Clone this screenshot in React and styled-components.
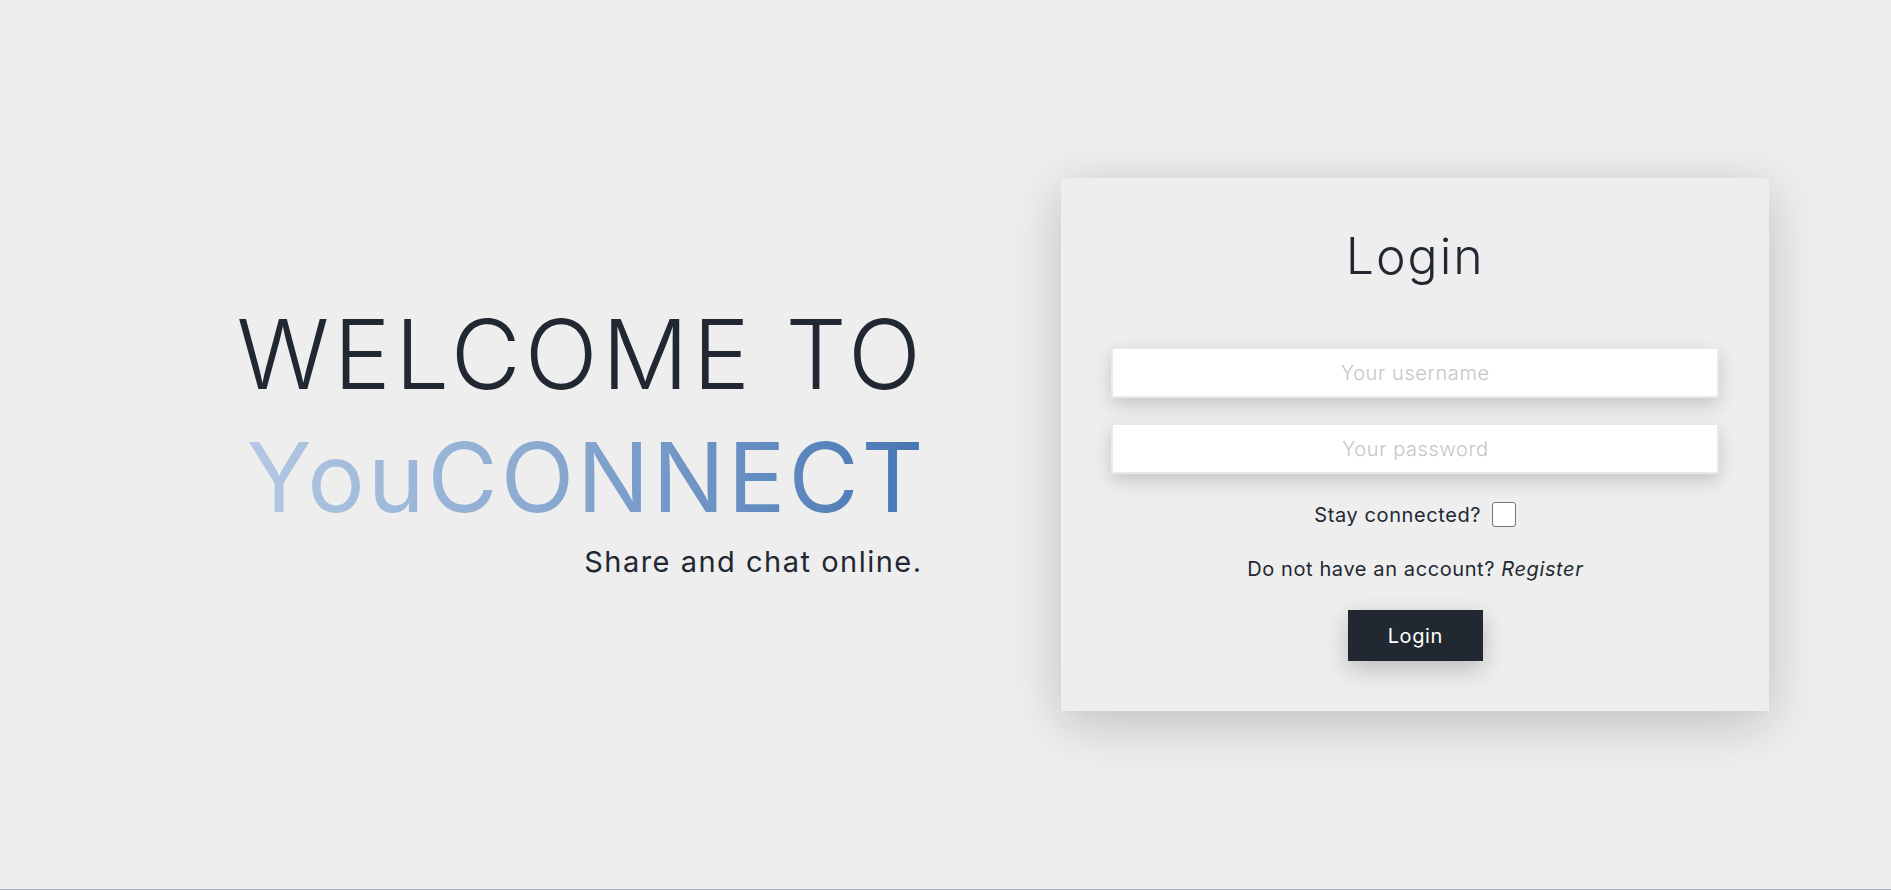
import React from "react";
import styled, { createGlobalStyle } from "styled-components";

const Global = createGlobalStyle`
  html, body { margin: 0; padding: 0; background: #eeeeee; }
  body { font-family: Inter, "Open Sans", sans-serif; color: #222831; }
  * { box-sizing: border-box; }
`;

const Page = styled.main`
  height: 890px;
  display: grid;
  grid-template-columns: 1fr 1fr;
  align-items: center;
  border-bottom: 1px solid #aab1b8;
  background: #eeeeee;
`;

const Hero = styled.section`
  display: flex;
  flex-direction: column;
  align-items: flex-end;
  padding-right: 22px;
  padding-bottom: 12px;
`;

const Welcome = styled.h1`
  margin: 0 -1.6px 0 0;
  font-size: 96px;
  line-height: 1.2;
  font-weight: 300;
  letter-spacing: 4.3px;
  color: #222831;
`;

const Brand = styled.h1`
  margin: 8px -3px 0 0;
  font-size: 96px;
  line-height: 1.2;
  font-weight: 400;
  letter-spacing: 3px;
  background: linear-gradient(90deg, #b3c8e3 0%, #8eacd2 40%, #4676b4 100%);
  -webkit-background-clip: text;
  background-clip: text;
  color: transparent;
`;

const Tagline = styled.p`
  margin: 10px 0.9px 0 0;
  font-size: 29px;
  line-height: 1.2;
  font-weight: 400;
  letter-spacing: 1.5px;
  color: #222831;
`;

const Side = styled.section`
  display: flex;
  justify-content: center;
  padding-right: 6px;
`;

const Card = styled.form`
  width: 708px;
  padding: 48px 50px 50px;
  background: #eeeeee;
  box-shadow: 0 12px 50px rgba(0, 0, 0, 0.2);
  display: flex;
  flex-direction: column;
  align-items: center;
`;

const Title = styled.h2`
  margin: 0;
  font-size: 50px;
  line-height: 60px;
  font-weight: 300;
  letter-spacing: 2px;
  color: #222831;
`;

const Field = styled.input`
  width: 100%;
  height: 51px;
  margin-top: ${(p) => p.$gap}px;
  border: 2px solid #e9e9e9;
  background: #ffffff;
  box-shadow: 0 7px 18px rgba(0, 0, 0, 0.17);
  font-family: inherit;
  font-size: 20px;
  font-weight: 300;
  letter-spacing: 0.6px;
  text-align: center;
  color: #222831;
  outline: none;
  &::placeholder { color: #c9c4c4; }
`;

const CheckRow = styled.label`
  margin-top: 28px;
  height: 25px;
  display: flex;
  align-items: center;
  gap: 11px;
  font-size: 20px;
  letter-spacing: 0.6px;
  color: #222831;
`;

const Check = styled.input`
  appearance: none;
  -webkit-appearance: none;
  margin: 0;
  width: 24px;
  height: 25px;
  border: 1.5px solid #767676;
  border-radius: 3px;
  background: #fff;
`;

const Note = styled.p`
  margin: 30px 0 0;
  font-size: 20px;
  line-height: 24px;
  letter-spacing: 0.6px;
  color: #222831;
`;

const RegisterLink = styled.a`
  font-style: italic;
  color: #222831;
  text-decoration: none;
`;

const Submit = styled.button`
  margin-top: 29px;
  width: 135px;
  height: 51px;
  border: none;
  background: #222831;
  color: #ffffff;
  font-family: inherit;
  font-size: 20px;
  font-weight: 400;
  letter-spacing: 0.6px;
  box-shadow: 0 8px 25px rgba(0, 0, 0, 0.22);
  cursor: pointer;
`;

export default function App() {
  return (
    <>
      <Global />
      <Page>
        <Hero>
          <Welcome>WELCOME TO</Welcome>
          <Brand>YouCONNECT</Brand>
          <Tagline>Share and chat online.</Tagline>
        </Hero>
        <Side>
          <Card onSubmit={(e) => e.preventDefault()}>
            <Title>Login</Title>
            <Field $gap={61} type="text" placeholder="Your username" />
            <Field $gap={25} type="password" placeholder="Your password" />
            <CheckRow>
              Stay connected?
              <Check type="checkbox" />
            </CheckRow>
            <Note>
              Do not have an account? <RegisterLink href="#">Register</RegisterLink>
            </Note>
            <Submit type="submit">Login</Submit>
          </Card>
        </Side>
      </Page>
    </>
  );
}
